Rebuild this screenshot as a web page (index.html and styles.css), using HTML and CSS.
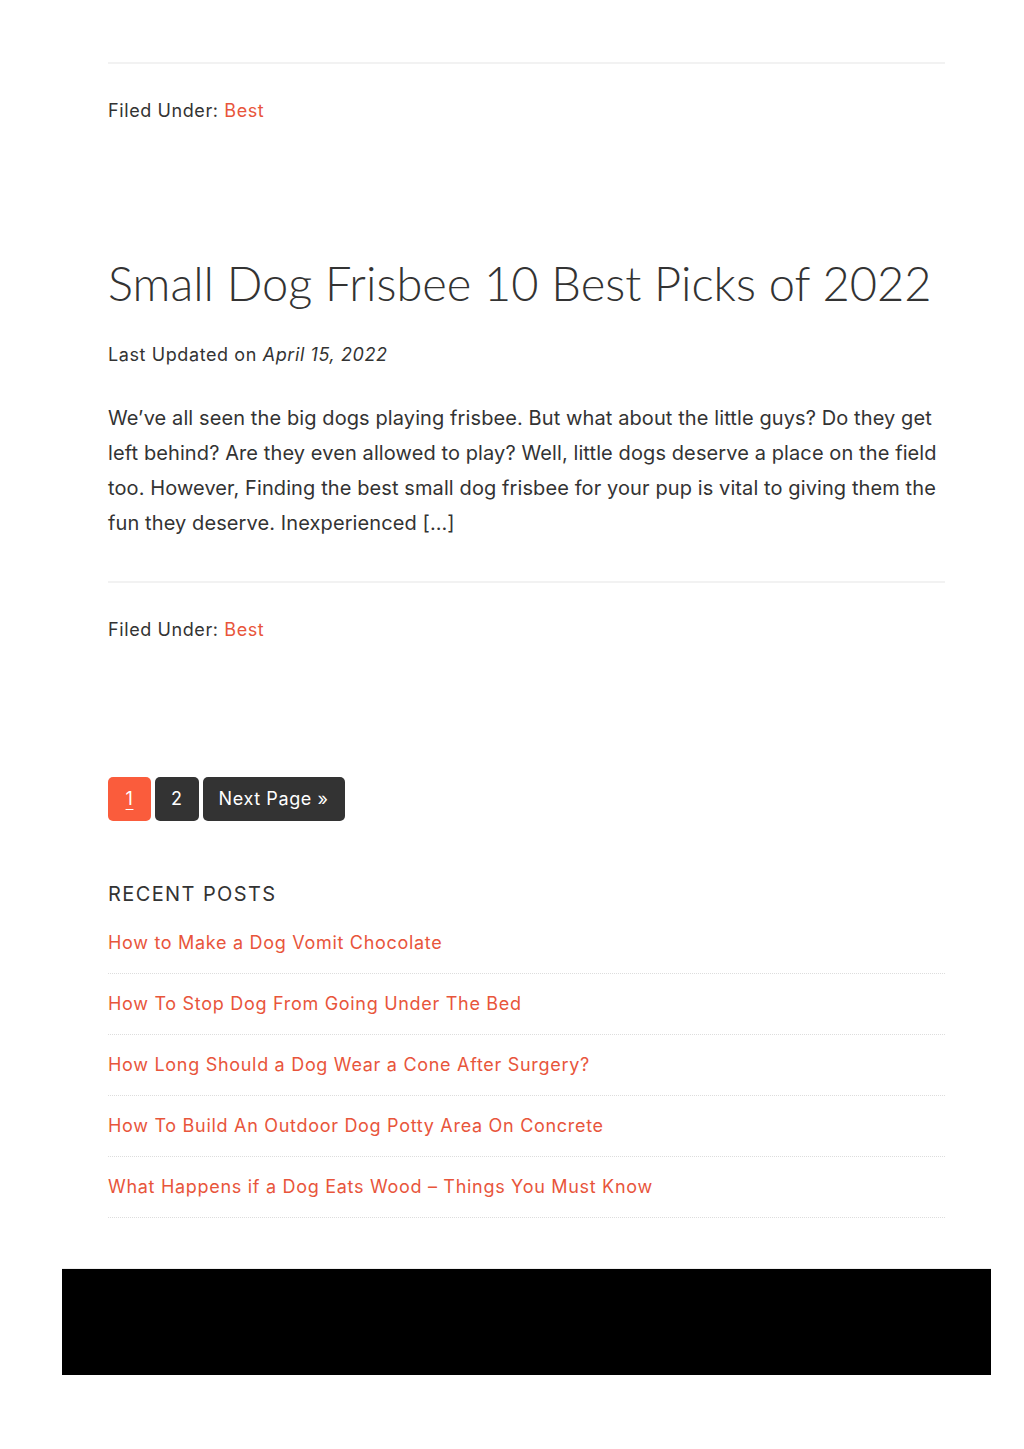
FILE: index.html
```html
<!DOCTYPE html>
<html lang="en">
<head>
    <meta charset="UTF-8">
    <title>Best</title>
    <link rel="stylesheet" href="styles.css">
</head>
<body>

<div class="site">
    <main class="content">
        <article class="entry">
            <footer class="entry-footer">
                Filed Under: <a href="#">Best</a>
            </footer>
        </article>

        <article class="entry">
            <h2 class="entry-title">Small Dog Frisbee 10 Best Picks of 2022</h2>
            <p class="entry-meta">Last Updated on <em>April 15, 2022</em></p>
            <p class="entry-content">We’ve all seen the big dogs playing frisbee. But what about the little guys? Do they get left behind? Are they even allowed to play? Well, little dogs deserve a place on the field too. However, Finding the best small dog frisbee for your pup is vital to giving them the fun they deserve. Inexperienced [&hellip;]</p>
            <footer class="entry-footer">
                Filed Under: <a href="#">Best</a>
            </footer>
        </article>

        <div class="pagination">
            <a href="#" class="page current">1</a>
            <a href="#" class="page">2</a>
            <a href="#" class="page">Next Page &raquo;</a>
        </div>

        <section class="widget">
            <h3 class="widget-title">Recent Posts</h3>
            <ul>
                <li><a href="#">How to Make a Dog Vomit Chocolate</a></li>
                <li><a href="#">How To Stop Dog From Going Under The Bed</a></li>
                <li><a href="#">How Long Should a Dog Wear a Cone After Surgery?</a></li>
                <li><a href="#">How To Build An Outdoor Dog Potty Area On Concrete</a></li>
                <li><a href="#">What Happens if a Dog Eats Wood – Things You Must Know</a></li>
            </ul>
        </section>
    </main>

    <div class="footer-bar"></div>
</div>

</body>
</html>
```

FILE: styles.css
```css
* {
    box-sizing: border-box;
    margin: 0;
    padding: 0;
}

body {
    font-family: Inter, "Liberation Sans", sans-serif;
    color: #333;
    background-color: #fff;
    letter-spacing: 0.6px;
}

a {
    color: #e8553b;
    text-decoration: none;
}

.content {
    width: 837px;
    margin-left: 108px;
    padding-top: 62px;
}

.entry {
    margin-bottom: 128px;
}

.entry:last-of-type {
    margin-bottom: 132px;
}

.entry-footer {
    border-top: 2px solid #f2f2f2;
    padding-top: 32px;
    font-size: 18px;
    line-height: 30px;
}

.entry-title {
    font-family: Lato, Inter, sans-serif;
    font-size: 47px;
    font-weight: 300;
    letter-spacing: 0;
    line-height: 58px;
    margin-bottom: 28px;
    white-space: nowrap;
}

.entry-meta {
    font-size: 18px;
    line-height: 30px;
    margin-bottom: 31px;
}

.entry-content {
    font-size: 20px;
    line-height: 35px;
    letter-spacing: 0.1px;
    margin-bottom: 40px;
}

.pagination {
    display: flex;
    gap: 4px;
    margin-bottom: 58px;
}

.page {
    display: block;
    height: 44px;
    line-height: 44px;
    padding: 0 16px;
    min-width: 43px;
    text-align: center;
    background-color: #333;
    color: #fff;
    font-size: 18px;
    border-radius: 5px;
}

.page.current {
    background-color: #fa5c3c;
    text-decoration: underline;
    text-underline-offset: 4px;
    text-decoration-thickness: 1px;
}

.widget-title {
    font-size: 20px;
    font-weight: 400;
    line-height: 30px;
    letter-spacing: 1.4px;
    text-transform: uppercase;
    margin-bottom: 19px;
}

.widget ul {
    list-style: none;
}

.widget li {
    font-size: 18px;
    line-height: 30px;
    letter-spacing: 0.7px;
    padding-bottom: 15px;
    border-bottom: 1px dotted #ddd;
    margin-bottom: 15px;
}

.widget li:last-child {
    margin-bottom: 0;
}

.footer-bar {
    width: 929px;
    height: 107px;
    margin: 50px 0 0 62px;
    border-top: 1px solid #eee;
    background-color: #000;
}
```
